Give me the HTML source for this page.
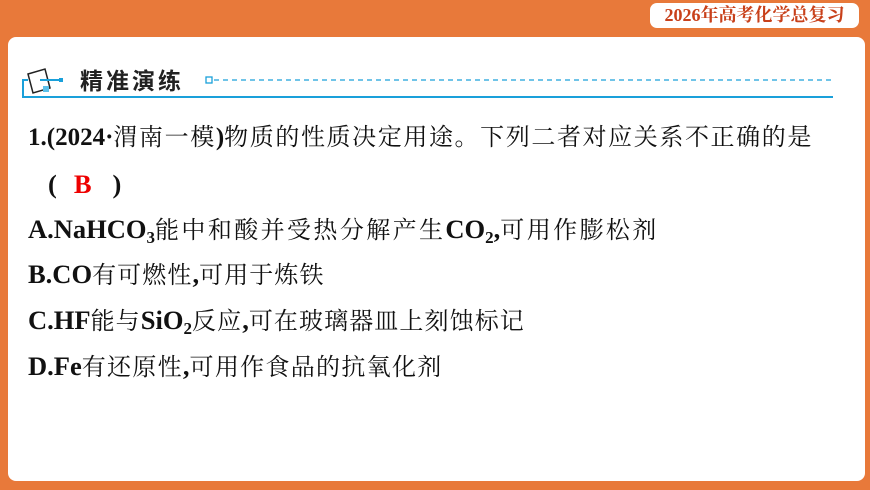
<!DOCTYPE html>
<html><head><meta charset="utf-8"><style>
html,body{margin:0;padding:0}
body{width:870px;height:490px;background:#E8793A;position:relative;overflow:hidden}
.panel{position:absolute;left:8px;top:37px;width:857px;height:444px;background:#fff;border-radius:8px}
.badge{position:absolute;left:650px;top:3px;width:209px;height:25px;background:#fff;border-radius:7px;text-align:center;font:bold 18px/25px "Liberation Serif","Noto Serif CJK SC",serif;color:#C8401A}
.title{position:absolute;left:80px;top:65px;font:bold 23px/28px "Noto Sans CJK SC",sans-serif;color:#222;letter-spacing:3px}
.ln{position:absolute;left:28px;font-size:24px;line-height:30px;font-family:"Liberation Serif","Noto Serif CJK SC",serif;color:#111;letter-spacing:1.6px;white-space:nowrap}
.ln b{font-weight:bold;letter-spacing:0;font-size:26.5px}
sub{font-size:17px;vertical-align:-5px;line-height:0}
</style></head><body>
<div class="panel"></div>
<div class="badge">2026年高考化学总复习</div>
<svg style="position:absolute;left:0;top:0" width="870" height="110">
<path d="M23 98 V80 H28" stroke="#1AA0DA" stroke-width="2" fill="none"/>
<line x1="23" y1="97" x2="833" y2="97" stroke="#1AA0DA" stroke-width="2"/>
<path d="M28 74 L45 69 L50 88 L33 93 Z" fill="none" stroke="#222" stroke-width="1.5"/>
<line x1="40" y1="80" x2="61" y2="80" stroke="#1AA0DA" stroke-width="2"/>
<rect x="59" y="78" width="4" height="4" fill="#1AA0DA"/>
<rect x="43" y="86" width="6" height="6" fill="#5BC0EA"/>
<rect x="206" y="77" width="6" height="6" fill="#fff" stroke="#1AA0DA" stroke-width="1.3"/>
<line x1="214" y1="80" x2="833" y2="80" stroke="#1AA0DA" stroke-width="1.3" stroke-dasharray="5,4"/>
</svg>
<div class="title">精准演练</div>
<div class="ln" style="top:123px"><b style="font-size:25px">1.(2024·</b>渭南一模<b style="font-size:25px">)</b>物质的性质决定用途。下列二者对应关系不正确的是</div>
<div class="ln" style="top:169px;left:48px"><b>(</b><b style="color:#E00;margin-left:17px">B</b><b style="margin-left:21px">)</b></div>
<div class="ln" style="top:214px;letter-spacing:2.4px"><b>A.NaHCO<sub>3</sub></b>能中和酸并受热分解产生<b>CO<sub>2</sub>,</b>可用作膨松剂</div>
<div class="ln" style="top:259px;letter-spacing:1.1px"><b>B.CO</b>有可燃性<b>,</b>可用于炼铁</div>
<div class="ln" style="top:305px;letter-spacing:1.1px"><b>C.HF</b>能与<b>SiO<sub>2</sub></b>反应<b>,</b>可在玻璃器皿上刻蚀标记</div>
<div class="ln" style="top:351px;letter-spacing:1.3px"><b>D.Fe</b>有还原性<b>,</b>可用作食品的抗氧化剂</div>
</body></html>
